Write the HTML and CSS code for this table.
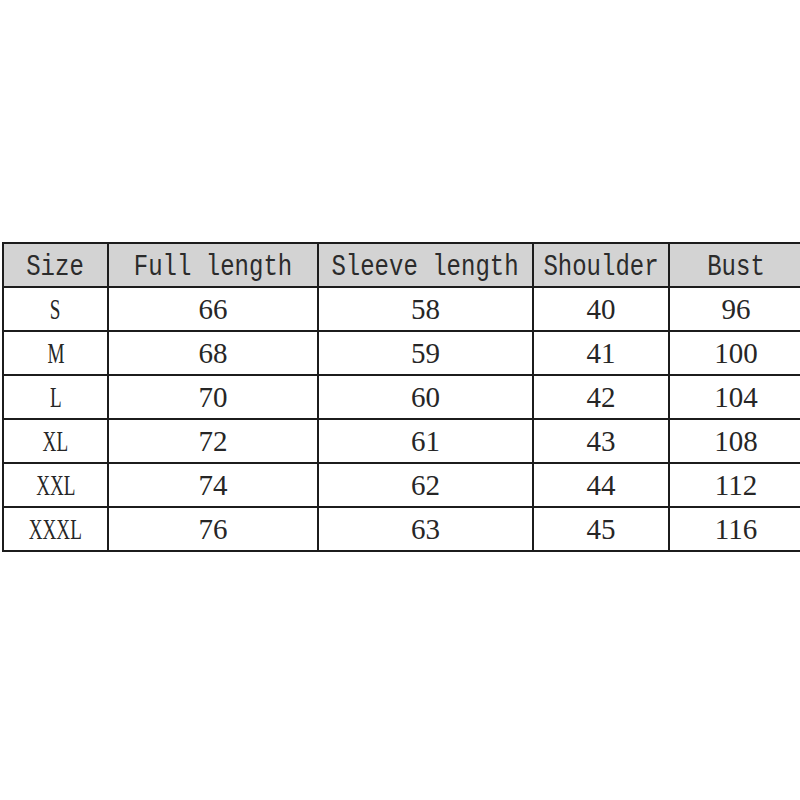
FILE: index.html
```html
<!DOCTYPE html>
<html>
<head>
<meta charset="utf-8">
<link rel="stylesheet" href="styles.css">
</head>
<body>
<div class="page">
<table class="sizes">
<colgroup>
<col class="c1"><col class="c2"><col class="c3"><col class="c4"><col class="c5">
</colgroup>
<thead>
<tr><th><span class="hd">Size</span></th><th><span class="hd">Full length</span></th><th><span class="hd">Sleeve length</span></th><th><span class="hd">Shoulder</span></th><th><span class="hd">Bust</span></th></tr>
</thead>
<tbody>
<tr><td><span class="lbl">S</span></td><td>66</td><td>58</td><td>40</td><td>96</td></tr>
<tr><td><span class="lbl">M</span></td><td>68</td><td>59</td><td>41</td><td>100</td></tr>
<tr><td><span class="lbl">L</span></td><td>70</td><td>60</td><td>42</td><td>104</td></tr>
<tr><td><span class="lbl">XL</span></td><td>72</td><td>61</td><td>43</td><td>108</td></tr>
<tr><td><span class="lbl">XXL</span></td><td>74</td><td>62</td><td>44</td><td>112</td></tr>
<tr><td><span class="lbl">XXXL</span></td><td>76</td><td>63</td><td>45</td><td>116</td></tr>
</tbody>
</table>
</div>
</body>
</html>
```

FILE: styles.css
```css
html, body {
  margin: 0;
  padding: 0;
  background: #ffffff;
  width: 800px;
  height: 800px;
  overflow: hidden;
}
.page {
  padding: 242px 0 0 2px;
}
.sizes {
  border-collapse: collapse;
  table-layout: fixed;
  width: 800px;
  color: #222222;
}
.c1 { width: 105px; }
.c2 { width: 210px; }
.c3 { width: 215px; }
.c4 { width: 136px; }
.c5 { width: 134px; }
.sizes th, .sizes td {
  border: 2px solid #1c1c1c;
  height: 42px;
  padding: 0;
  text-align: center;
  vertical-align: middle;
  white-space: nowrap;
  overflow: visible;
}
.sizes th {
  background: #d3d3d3;
  font-family: "Liberation Mono", monospace;
  font-weight: normal;
  font-size: 30px;
  color: #2b2b2b;
}
.hd {
  display: inline-block;
  transform: scaleX(0.8);
  margin: 0 -100px;
  padding-top: 4px;
}
.sizes td {
  font-family: "Liberation Serif", serif;
  font-size: 29px;
  color: #262626;
}
.lbl {
  display: inline-block;
  transform: scaleX(0.66);
}
```
